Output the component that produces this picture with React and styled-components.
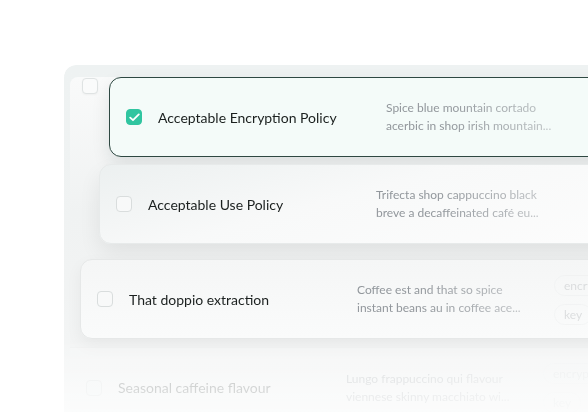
import React from "react";
import styled, { createGlobalStyle } from "styled-components";

const Global = createGlobalStyle`
  html, body { margin: 0; padding: 0; background: #ffffff; }
  body { font-family: "Lato", "Inter", sans-serif; }
  * { box-sizing: border-box; }
`;

const Stage = styled.div`
  width: 588px;
  height: 412px;
  overflow: hidden;
  background: #ffffff;
  padding: 65px 0 0 64px;
`;

const Panel = styled.div`
  width: 560px;
  height: 380px;
  border-radius: 12px 0 0 0;
  background: linear-gradient(to bottom, #eef2f2 0%, #f1f3f3 60%, #f8f9f9 100%);
  -webkit-mask-image: linear-gradient(to bottom, #000 0%, #000 72%, rgba(0,0,0,0.15) 100%);
  mask-image: linear-gradient(to bottom, #000 0%, #000 72%, rgba(0,0,0,0.15) 100%);
`;

const Header = styled.div`
  height: 42px;
  padding: 13px 0 0 18px;
`;

const Body = styled.div`
  margin-left: 6px;
  height: 340px;
  border-radius: 8px 0 0 0;
  background: linear-gradient(to bottom, #f9fafa 0%, #f0f2f2 40%, #f4f5f5 100%);
`;

const Stack = styled.div`
  display: flex;
  flex-direction: column;
  margin-top: -30px;
`;

const Card = styled.div`
  display: flex;
  align-items: center;
  width: 620px;
  height: 80px;
  padding-left: 16px;
  margin-left: ${(p) => p.$indent}px;
  margin-top: ${(p) => p.$gap}px;
  border-radius: 12px;
  border: 1px solid ${(p) => p.$border};
  background: ${(p) => p.$bg};
  box-shadow: ${(p) => p.$shadow};
`;

const PlainRow = styled.div`
  display: flex;
  align-items: center;
  height: 80px;
  padding-left: 16px;
  margin-top: 8px;
  border-top: 1px solid #eceeee;
  background: linear-gradient(to bottom, #fcfcfc, #f9fafa);
  opacity: 0.28;
`;

const Box = styled.span`
  flex: 0 0 auto;
  display: inline-flex;
  align-items: center;
  justify-content: center;
  width: 16px;
  height: 16px;
  border-radius: 4px;
  margin-right: 16px;
  background: ${(p) => (p.$on ? "#30c5a0" : "#f8f9f9")};
  border: 1px solid ${(p) => (p.$on ? "#30c5a0" : "#d9dddd")};
`;

const HeaderBox = styled(Box)`
  background: #fafbfb;
  border-color: #dfe3e3;
  box-shadow: 0 1px 2px rgba(0,0,0,0.04);
`;

const Title = styled.span`
  flex: 0 0 228px;
  font-size: 14px;
  color: #1b201f;
  white-space: nowrap;
`;

const Desc = styled.div`
  flex: 0 0 197px;
  font-size: 12px;
  line-height: 18px;
  color: #92979c;
  -webkit-mask-image: linear-gradient(to right, #000 30%, rgba(0,0,0,0.4) 100%);
  mask-image: linear-gradient(to right, #000 30%, rgba(0,0,0,0.4) 100%);
  & > div { white-space: nowrap; }
`;

const Tags = styled.div`
  display: flex;
  flex-direction: column;
  gap: 7px;
  opacity: 0.3;
`;

const Tag = styled.span`
  display: inline-block;
  height: 21px;
  padding: 0 9px;
  border-radius: 11px;
  border: 1px solid #e6e8e9;
  font-size: 12px;
  line-height: 19px;
  color: #9ca0a4;
  white-space: nowrap;
`;

const Check = () => (
  <svg width="11" height="9" viewBox="0 0 11 9" fill="none">
    <polyline points="1.2,4.6 4,7.2 9.8,1.4" stroke="#ffffff" strokeWidth="1.8" strokeLinecap="round" strokeLinejoin="round" />
  </svg>
);

const rows = [
  {
    title: "Acceptable Encryption Policy",
    desc: ["Spice blue mountain cortado", "acerbic in shop irish mountain..."],
    on: true,
    indent: 39,
    gap: 0,
    border: "#2e4842",
    bg: "#f4fbf9",
    shadow: "0 8px 18px rgba(20,40,35,0.10)",
  },
  {
    title: "Acceptable Use Policy",
    desc: ["Trifecta shop cappuccino black", "breve a decaffeinated café eu..."],
    indent: 29,
    gap: 7,
    border: "#e7eaea",
    bg: "linear-gradient(165deg, #ecf0f0 0%, #f8f9f9 40%, #fdfdfd 100%)",
    shadow: "0 10px 22px rgba(0,0,0,0.07)",
  },
  {
    title: "That doppio extraction",
    desc: ["Coffee est and that so spice", "instant beans au in coffee ace..."],
    indent: 10,
    gap: 15,
    border: "#e6e8e8",
    bg: "linear-gradient(to bottom, #f5f6f6, #fafbfb)",
    shadow: "0 6px 16px rgba(0,0,0,0.05)",
    tags: true,
  },
];

export default function App() {
  return (
    <>
      <Global />
      <Stage>
        <Panel>
          <Header>
            <HeaderBox />
          </Header>
          <Body>
            <Stack>
              {rows.map((r) => (
                <Card key={r.title} $indent={r.indent} $gap={r.gap} $border={r.border} $bg={r.bg} $shadow={r.shadow}>
                  <Box $on={r.on}>{r.on && <Check />}</Box>
                  <Title>{r.title}</Title>
                  <Desc>
                    <div>{r.desc[0]}</div>
                    <div>{r.desc[1]}</div>
                  </Desc>
                  {r.tags && (
                    <Tags>
                      <div><Tag>encryption</Tag></div>
                      <div><Tag>key</Tag></div>
                    </Tags>
                  )}
                </Card>
              ))}
              <PlainRow>
                <Box />
                <Title>Seasonal caffeine flavour</Title>
                <Desc>
                  <div>Lungo frappuccino qui flavour</div>
                  <div>viennese skinny macchiato wi...</div>
                </Desc>
                <Tags>
                  <div><Tag>encryption</Tag></div>
                  <div><Tag>key</Tag></div>
                </Tags>
              </PlainRow>
            </Stack>
          </Body>
        </Panel>
      </Stage>
    </>
  );
}
